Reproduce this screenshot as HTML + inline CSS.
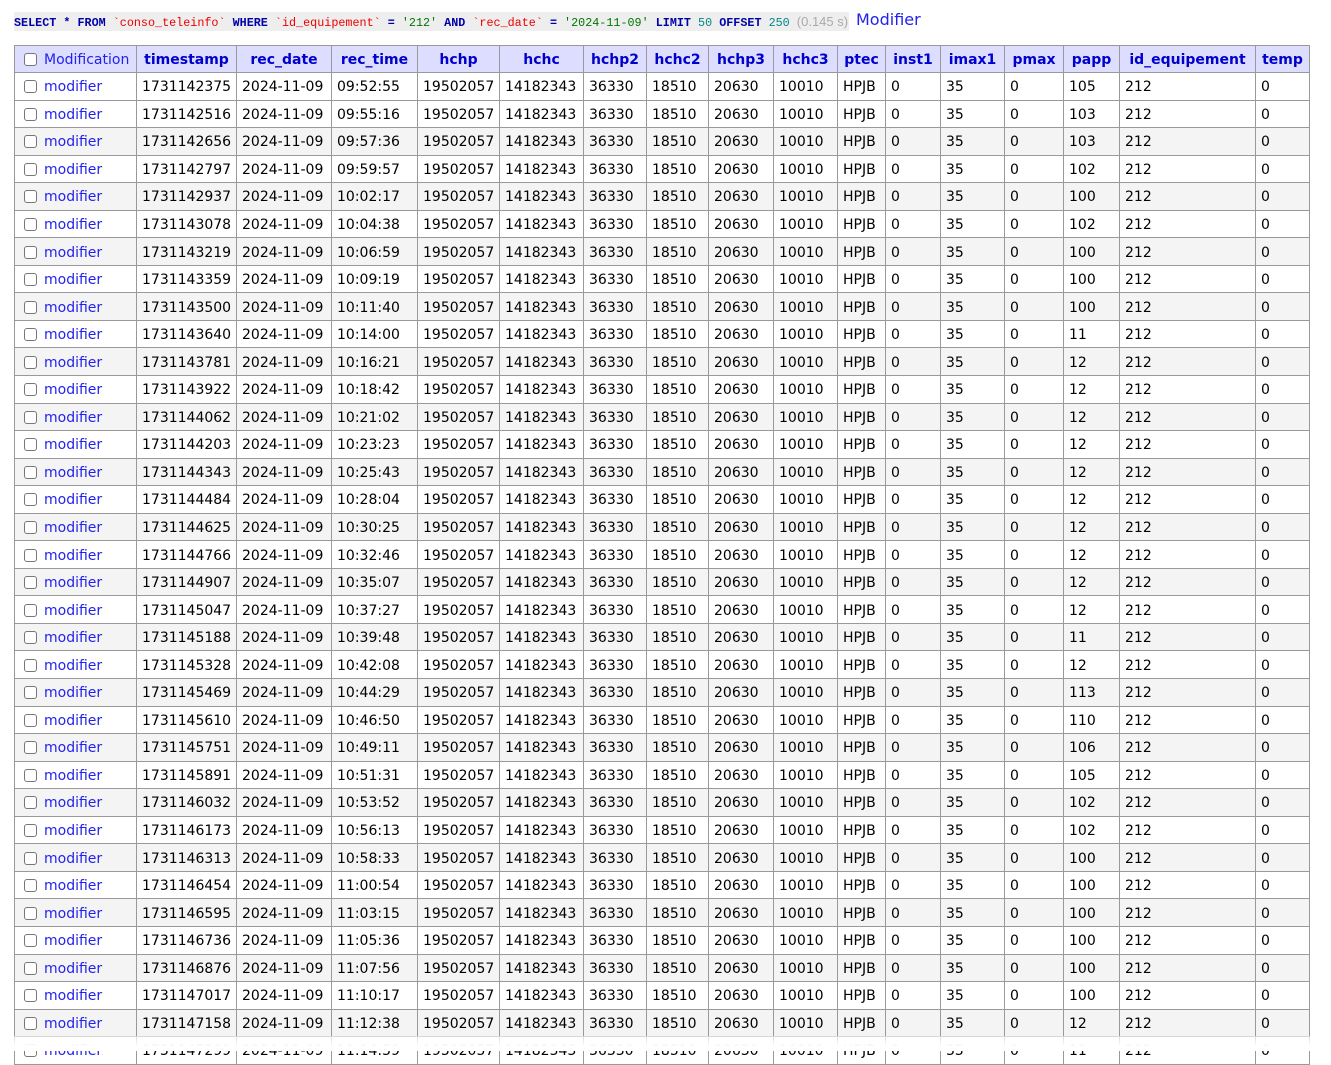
<!DOCTYPE html>
<html><head><meta charset="utf-8"><style>
body{margin:0;background:#fff;font-family:"DejaVu Sans",Verdana,sans-serif;font-size:14px;color:#000;position:relative;height:1051px;overflow:hidden}
.sql{position:absolute;left:14px;top:12px;height:19px;line-height:19px;padding-right:1px;background:#eee;font-family:"Liberation Mono",monospace;font-size:11.75px;font-weight:bold;color:#00a;white-space:pre}
.sql .s{color:#e00;font-weight:normal}.sql .v{color:#070;font-weight:normal}.sql .n{color:#088;font-weight:normal}.sql .t{color:#aaa;font-weight:normal;font-family:"Liberation Sans",sans-serif;font-size:13px}
.mod{position:absolute;left:856px;top:10px;color:#22e;font-size:16px}
table{position:absolute;left:14px;top:45px;border-collapse:collapse;table-layout:fixed;width:1296px}
td,th{border:1px solid #999;padding:2px 5px 0 5px;white-space:nowrap;overflow:hidden;height:24.56px;line-height:24px}
th{background:#ddf;color:#00c;font-weight:bold;text-align:center;height:25px;line-height:24px;padding-top:1px;font-size:14px}
th.m{font-weight:normal;text-align:left;color:#22e;font-size:14px}
tr:nth-child(odd) td{background:#f4f4f4}
tr:first-child td{background:#fff}
.cb{display:inline-block;width:11px;height:11px;border:1px solid #777;border-radius:3px;background:#fff;vertical-align:-2px;margin:0 7px 0 4px}
a{color:#22e;text-decoration:none}
.fade{position:absolute;left:0;top:1036px;width:1331px;height:15px;background:linear-gradient(rgba(255,255,255,.6),#fff 70%)}
</style></head><body>
<div class="sql">SELECT * FROM <span class="s">`conso_teleinfo`</span> WHERE <span class="s">`id_equipement`</span> = <span class="v">'212'</span> AND <span class="s">`rec_date`</span> = <span class="v">'2024-11-09'</span> LIMIT <span class="n">50</span> OFFSET <span class="n">250</span> <span class="t">(0.145 s)</span></div>
<a class="mod">Modifier</a>
<table>
<colgroup><col style="width:122px"><col style="width:100px"><col style="width:95px"><col style="width:86px"><col style="width:82px"><col style="width:84px"><col style="width:63px"><col style="width:62px"><col style="width:65px"><col style="width:64px"><col style="width:48px"><col style="width:55px"><col style="width:64px"><col style="width:59px"><col style="width:56px"><col style="width:136px"><col style="width:54px"></colgroup>
<thead><tr><th class="m"><span class="cb"></span>Modification</th><th>timestamp</th><th>rec_date</th><th>rec_time</th><th>hchp</th><th>hchc</th><th>hchp2</th><th>hchc2</th><th>hchp3</th><th>hchc3</th><th>ptec</th><th>inst1</th><th>imax1</th><th>pmax</th><th>papp</th><th>id_equipement</th><th>temp</th></tr></thead>
<tbody>
<tr><td><span class="cb"></span><a>modifier</a></td><td>1731142375</td><td>2024-11-09</td><td>09:52:55</td><td>19502057</td><td>14182343</td><td>36330</td><td>18510</td><td>20630</td><td>10010</td><td>HPJB</td><td>0</td><td>35</td><td>0</td><td>105</td><td>212</td><td>0</td></tr>
<tr><td><span class="cb"></span><a>modifier</a></td><td>1731142516</td><td>2024-11-09</td><td>09:55:16</td><td>19502057</td><td>14182343</td><td>36330</td><td>18510</td><td>20630</td><td>10010</td><td>HPJB</td><td>0</td><td>35</td><td>0</td><td>103</td><td>212</td><td>0</td></tr>
<tr><td><span class="cb"></span><a>modifier</a></td><td>1731142656</td><td>2024-11-09</td><td>09:57:36</td><td>19502057</td><td>14182343</td><td>36330</td><td>18510</td><td>20630</td><td>10010</td><td>HPJB</td><td>0</td><td>35</td><td>0</td><td>103</td><td>212</td><td>0</td></tr>
<tr><td><span class="cb"></span><a>modifier</a></td><td>1731142797</td><td>2024-11-09</td><td>09:59:57</td><td>19502057</td><td>14182343</td><td>36330</td><td>18510</td><td>20630</td><td>10010</td><td>HPJB</td><td>0</td><td>35</td><td>0</td><td>102</td><td>212</td><td>0</td></tr>
<tr><td><span class="cb"></span><a>modifier</a></td><td>1731142937</td><td>2024-11-09</td><td>10:02:17</td><td>19502057</td><td>14182343</td><td>36330</td><td>18510</td><td>20630</td><td>10010</td><td>HPJB</td><td>0</td><td>35</td><td>0</td><td>100</td><td>212</td><td>0</td></tr>
<tr><td><span class="cb"></span><a>modifier</a></td><td>1731143078</td><td>2024-11-09</td><td>10:04:38</td><td>19502057</td><td>14182343</td><td>36330</td><td>18510</td><td>20630</td><td>10010</td><td>HPJB</td><td>0</td><td>35</td><td>0</td><td>102</td><td>212</td><td>0</td></tr>
<tr><td><span class="cb"></span><a>modifier</a></td><td>1731143219</td><td>2024-11-09</td><td>10:06:59</td><td>19502057</td><td>14182343</td><td>36330</td><td>18510</td><td>20630</td><td>10010</td><td>HPJB</td><td>0</td><td>35</td><td>0</td><td>100</td><td>212</td><td>0</td></tr>
<tr><td><span class="cb"></span><a>modifier</a></td><td>1731143359</td><td>2024-11-09</td><td>10:09:19</td><td>19502057</td><td>14182343</td><td>36330</td><td>18510</td><td>20630</td><td>10010</td><td>HPJB</td><td>0</td><td>35</td><td>0</td><td>100</td><td>212</td><td>0</td></tr>
<tr><td><span class="cb"></span><a>modifier</a></td><td>1731143500</td><td>2024-11-09</td><td>10:11:40</td><td>19502057</td><td>14182343</td><td>36330</td><td>18510</td><td>20630</td><td>10010</td><td>HPJB</td><td>0</td><td>35</td><td>0</td><td>100</td><td>212</td><td>0</td></tr>
<tr><td><span class="cb"></span><a>modifier</a></td><td>1731143640</td><td>2024-11-09</td><td>10:14:00</td><td>19502057</td><td>14182343</td><td>36330</td><td>18510</td><td>20630</td><td>10010</td><td>HPJB</td><td>0</td><td>35</td><td>0</td><td>11</td><td>212</td><td>0</td></tr>
<tr><td><span class="cb"></span><a>modifier</a></td><td>1731143781</td><td>2024-11-09</td><td>10:16:21</td><td>19502057</td><td>14182343</td><td>36330</td><td>18510</td><td>20630</td><td>10010</td><td>HPJB</td><td>0</td><td>35</td><td>0</td><td>12</td><td>212</td><td>0</td></tr>
<tr><td><span class="cb"></span><a>modifier</a></td><td>1731143922</td><td>2024-11-09</td><td>10:18:42</td><td>19502057</td><td>14182343</td><td>36330</td><td>18510</td><td>20630</td><td>10010</td><td>HPJB</td><td>0</td><td>35</td><td>0</td><td>12</td><td>212</td><td>0</td></tr>
<tr><td><span class="cb"></span><a>modifier</a></td><td>1731144062</td><td>2024-11-09</td><td>10:21:02</td><td>19502057</td><td>14182343</td><td>36330</td><td>18510</td><td>20630</td><td>10010</td><td>HPJB</td><td>0</td><td>35</td><td>0</td><td>12</td><td>212</td><td>0</td></tr>
<tr><td><span class="cb"></span><a>modifier</a></td><td>1731144203</td><td>2024-11-09</td><td>10:23:23</td><td>19502057</td><td>14182343</td><td>36330</td><td>18510</td><td>20630</td><td>10010</td><td>HPJB</td><td>0</td><td>35</td><td>0</td><td>12</td><td>212</td><td>0</td></tr>
<tr><td><span class="cb"></span><a>modifier</a></td><td>1731144343</td><td>2024-11-09</td><td>10:25:43</td><td>19502057</td><td>14182343</td><td>36330</td><td>18510</td><td>20630</td><td>10010</td><td>HPJB</td><td>0</td><td>35</td><td>0</td><td>12</td><td>212</td><td>0</td></tr>
<tr><td><span class="cb"></span><a>modifier</a></td><td>1731144484</td><td>2024-11-09</td><td>10:28:04</td><td>19502057</td><td>14182343</td><td>36330</td><td>18510</td><td>20630</td><td>10010</td><td>HPJB</td><td>0</td><td>35</td><td>0</td><td>12</td><td>212</td><td>0</td></tr>
<tr><td><span class="cb"></span><a>modifier</a></td><td>1731144625</td><td>2024-11-09</td><td>10:30:25</td><td>19502057</td><td>14182343</td><td>36330</td><td>18510</td><td>20630</td><td>10010</td><td>HPJB</td><td>0</td><td>35</td><td>0</td><td>12</td><td>212</td><td>0</td></tr>
<tr><td><span class="cb"></span><a>modifier</a></td><td>1731144766</td><td>2024-11-09</td><td>10:32:46</td><td>19502057</td><td>14182343</td><td>36330</td><td>18510</td><td>20630</td><td>10010</td><td>HPJB</td><td>0</td><td>35</td><td>0</td><td>12</td><td>212</td><td>0</td></tr>
<tr><td><span class="cb"></span><a>modifier</a></td><td>1731144907</td><td>2024-11-09</td><td>10:35:07</td><td>19502057</td><td>14182343</td><td>36330</td><td>18510</td><td>20630</td><td>10010</td><td>HPJB</td><td>0</td><td>35</td><td>0</td><td>12</td><td>212</td><td>0</td></tr>
<tr><td><span class="cb"></span><a>modifier</a></td><td>1731145047</td><td>2024-11-09</td><td>10:37:27</td><td>19502057</td><td>14182343</td><td>36330</td><td>18510</td><td>20630</td><td>10010</td><td>HPJB</td><td>0</td><td>35</td><td>0</td><td>12</td><td>212</td><td>0</td></tr>
<tr><td><span class="cb"></span><a>modifier</a></td><td>1731145188</td><td>2024-11-09</td><td>10:39:48</td><td>19502057</td><td>14182343</td><td>36330</td><td>18510</td><td>20630</td><td>10010</td><td>HPJB</td><td>0</td><td>35</td><td>0</td><td>11</td><td>212</td><td>0</td></tr>
<tr><td><span class="cb"></span><a>modifier</a></td><td>1731145328</td><td>2024-11-09</td><td>10:42:08</td><td>19502057</td><td>14182343</td><td>36330</td><td>18510</td><td>20630</td><td>10010</td><td>HPJB</td><td>0</td><td>35</td><td>0</td><td>12</td><td>212</td><td>0</td></tr>
<tr><td><span class="cb"></span><a>modifier</a></td><td>1731145469</td><td>2024-11-09</td><td>10:44:29</td><td>19502057</td><td>14182343</td><td>36330</td><td>18510</td><td>20630</td><td>10010</td><td>HPJB</td><td>0</td><td>35</td><td>0</td><td>113</td><td>212</td><td>0</td></tr>
<tr><td><span class="cb"></span><a>modifier</a></td><td>1731145610</td><td>2024-11-09</td><td>10:46:50</td><td>19502057</td><td>14182343</td><td>36330</td><td>18510</td><td>20630</td><td>10010</td><td>HPJB</td><td>0</td><td>35</td><td>0</td><td>110</td><td>212</td><td>0</td></tr>
<tr><td><span class="cb"></span><a>modifier</a></td><td>1731145751</td><td>2024-11-09</td><td>10:49:11</td><td>19502057</td><td>14182343</td><td>36330</td><td>18510</td><td>20630</td><td>10010</td><td>HPJB</td><td>0</td><td>35</td><td>0</td><td>106</td><td>212</td><td>0</td></tr>
<tr><td><span class="cb"></span><a>modifier</a></td><td>1731145891</td><td>2024-11-09</td><td>10:51:31</td><td>19502057</td><td>14182343</td><td>36330</td><td>18510</td><td>20630</td><td>10010</td><td>HPJB</td><td>0</td><td>35</td><td>0</td><td>105</td><td>212</td><td>0</td></tr>
<tr><td><span class="cb"></span><a>modifier</a></td><td>1731146032</td><td>2024-11-09</td><td>10:53:52</td><td>19502057</td><td>14182343</td><td>36330</td><td>18510</td><td>20630</td><td>10010</td><td>HPJB</td><td>0</td><td>35</td><td>0</td><td>102</td><td>212</td><td>0</td></tr>
<tr><td><span class="cb"></span><a>modifier</a></td><td>1731146173</td><td>2024-11-09</td><td>10:56:13</td><td>19502057</td><td>14182343</td><td>36330</td><td>18510</td><td>20630</td><td>10010</td><td>HPJB</td><td>0</td><td>35</td><td>0</td><td>102</td><td>212</td><td>0</td></tr>
<tr><td><span class="cb"></span><a>modifier</a></td><td>1731146313</td><td>2024-11-09</td><td>10:58:33</td><td>19502057</td><td>14182343</td><td>36330</td><td>18510</td><td>20630</td><td>10010</td><td>HPJB</td><td>0</td><td>35</td><td>0</td><td>100</td><td>212</td><td>0</td></tr>
<tr><td><span class="cb"></span><a>modifier</a></td><td>1731146454</td><td>2024-11-09</td><td>11:00:54</td><td>19502057</td><td>14182343</td><td>36330</td><td>18510</td><td>20630</td><td>10010</td><td>HPJB</td><td>0</td><td>35</td><td>0</td><td>100</td><td>212</td><td>0</td></tr>
<tr><td><span class="cb"></span><a>modifier</a></td><td>1731146595</td><td>2024-11-09</td><td>11:03:15</td><td>19502057</td><td>14182343</td><td>36330</td><td>18510</td><td>20630</td><td>10010</td><td>HPJB</td><td>0</td><td>35</td><td>0</td><td>100</td><td>212</td><td>0</td></tr>
<tr><td><span class="cb"></span><a>modifier</a></td><td>1731146736</td><td>2024-11-09</td><td>11:05:36</td><td>19502057</td><td>14182343</td><td>36330</td><td>18510</td><td>20630</td><td>10010</td><td>HPJB</td><td>0</td><td>35</td><td>0</td><td>100</td><td>212</td><td>0</td></tr>
<tr><td><span class="cb"></span><a>modifier</a></td><td>1731146876</td><td>2024-11-09</td><td>11:07:56</td><td>19502057</td><td>14182343</td><td>36330</td><td>18510</td><td>20630</td><td>10010</td><td>HPJB</td><td>0</td><td>35</td><td>0</td><td>100</td><td>212</td><td>0</td></tr>
<tr><td><span class="cb"></span><a>modifier</a></td><td>1731147017</td><td>2024-11-09</td><td>11:10:17</td><td>19502057</td><td>14182343</td><td>36330</td><td>18510</td><td>20630</td><td>10010</td><td>HPJB</td><td>0</td><td>35</td><td>0</td><td>100</td><td>212</td><td>0</td></tr>
<tr><td><span class="cb"></span><a>modifier</a></td><td>1731147158</td><td>2024-11-09</td><td>11:12:38</td><td>19502057</td><td>14182343</td><td>36330</td><td>18510</td><td>20630</td><td>10010</td><td>HPJB</td><td>0</td><td>35</td><td>0</td><td>12</td><td>212</td><td>0</td></tr>
<tr><td><span class="cb"></span><a>modifier</a></td><td>1731147299</td><td>2024-11-09</td><td>11:14:59</td><td>19502057</td><td>14182343</td><td>36330</td><td>18510</td><td>20630</td><td>10010</td><td>HPJB</td><td>0</td><td>35</td><td>0</td><td>11</td><td>212</td><td>0</td></tr>
</tbody></table>
<div class="fade"></div>
</body></html>
